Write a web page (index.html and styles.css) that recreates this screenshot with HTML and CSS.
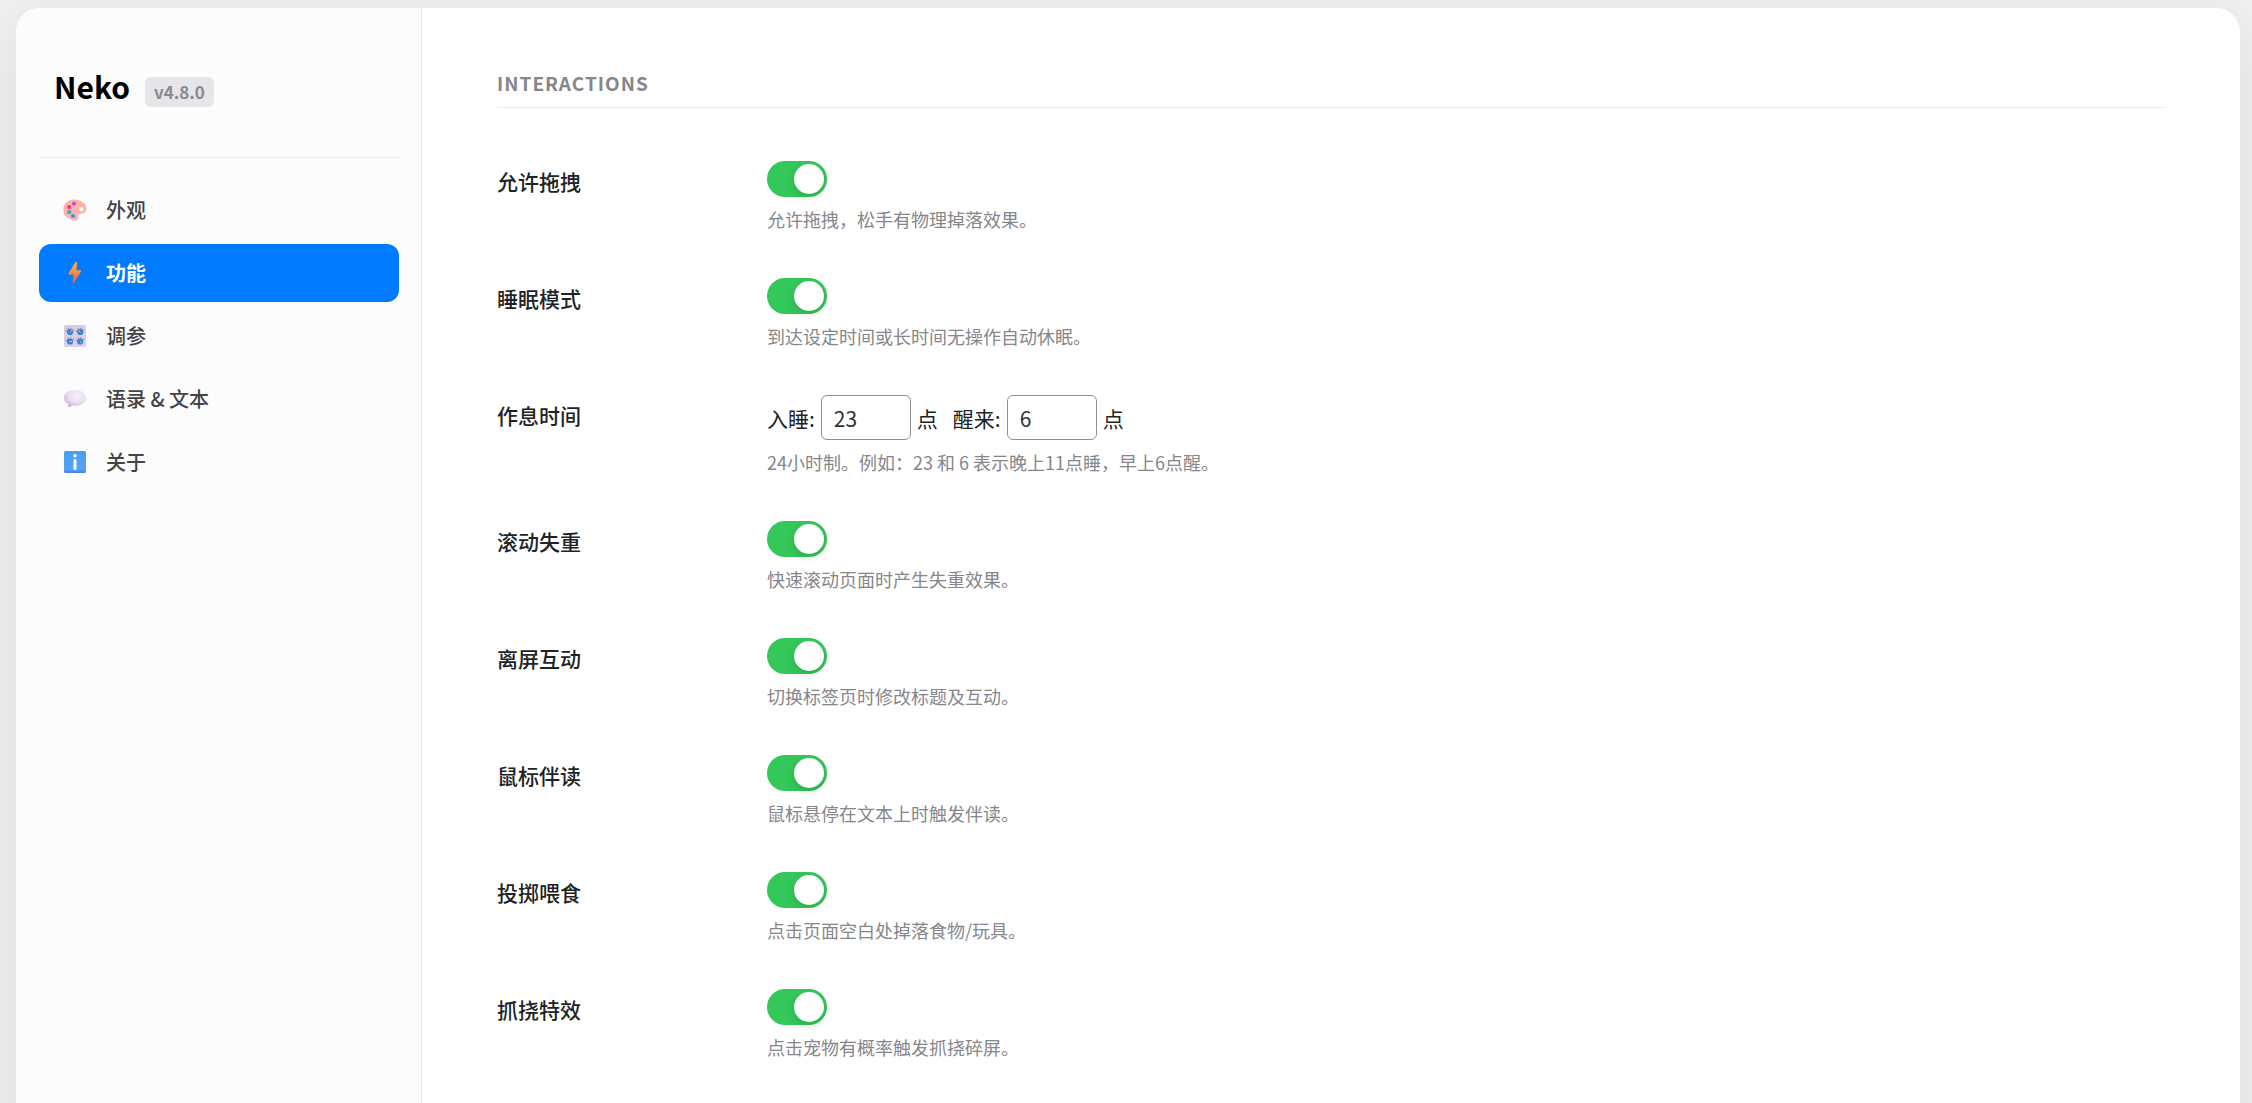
FILE: index.html
```html
<!DOCTYPE html>
<html lang="zh-CN">
<head>
    <meta charset="UTF-8">
    <meta name="viewport" content="width=device-width, initial-scale=1.0">
    <title>Neko</title>
    <link rel="stylesheet" href="styles.css">
</head>
<body>
    <div class="panel">
        <aside class="sidebar">
            <div class="brand">
                <h1>Neko</h1>
                <span class="version">v4.8.0</span>
            </div>
            <nav class="nav">
                <a href="#appearance" class="nav-item">
                    <svg class="nav-icon" viewBox="0 0 24 24" aria-hidden="true">
                        <defs>
                            <linearGradient id="palette" x1="0" y1="0" x2="0" y2="1">
                                <stop offset="0" stop-color="#ffb49c"/>
                                <stop offset="1" stop-color="#ffb3b5"/>
                            </linearGradient>
                        </defs>
                        <path fill="url(#palette)" fill-rule="evenodd" d="M11.5 1.5C17.900 1.500 23.500 5.500 23.500 10.800C23.500 14.200 21 15.900 18.200 15.900C16 15.900 15 16.500 15.200 18.200C15.500 20.500 15 22.500 12.300 22.500C5.500 22.500 .3 17.700 .3 11.600C.3 5.600 5.200 1.500 11.500 1.500ZM18.300 8.700A2.300 2.300 0 1 0 18.300 13.300A2.300 2.300 0 1 0 18.300 8.700Z"/>
                        <circle cx="11" cy="5.700" r="2.100" fill="#b756f0"/>
                        <circle cx="6.200" cy="9" r="2.100" fill="#e9387e"/>
                        <circle cx="6.200" cy="14.200" r="2.100" fill="#35b3ae"/>
                        <circle cx="10" cy="18" r="2.100" fill="#438ff0"/>
                    </svg>
                    外观
                </a>
                <a href="#features" class="nav-item active">
                    <svg class="nav-icon" viewBox="0 0 24 24" aria-hidden="true">
                        <defs>
                            <linearGradient id="bolt" x1="0" y1="0" x2="0" y2="1">
                                <stop offset="0" stop-color="#ffb43c"/>
                                <stop offset=".5" stop-color="#f58a45"/>
                                <stop offset="1" stop-color="#ef4f56"/>
                            </linearGradient>
                        </defs>
                        <path fill="url(#bolt)" d="M12.200 1.600Q12.500 1 13.200 1H13.400Q14.200 1 14.100 1.800L13.500 9.200H17.400Q18.700 9.300 18 10.400L10.800 22.300Q10.200 23.200 9.700 22.500L9.600 21.800L10.500 13.700H5.900Q4.800 13.500 5.400 12.500Z"/>
                    </svg>
                    功能
                </a>
                <a href="#tuning" class="nav-item">
                    <svg class="nav-icon" viewBox="0 0 24 24" aria-hidden="true">
                        <defs>
                            <linearGradient id="board" x1="0" y1="0" x2="1" y2="1">
                                <stop offset="0" stop-color="#d3c9dc"/>
                                <stop offset="1" stop-color="#e2d2f1"/>
                            </linearGradient>
                        </defs>
                        <rect x="1" y="1" width="22" height="22" rx="2" fill="url(#board)"/>
                        <g fill="none" stroke="#8e8299" stroke-width="1.200" stroke-dasharray="1.200 1.500">
                            <path d="M3.100 7.500A4 4 0 0 1 10.900 7.500"/>
                            <path d="M13.300 7.500A4 4 0 0 1 21.100 7.500"/>
                            <path d="M3.100 16.800A4 4 0 0 1 10.900 16.800"/>
                            <path d="M13.300 16.800A4 4 0 0 1 21.100 16.800"/>
                        </g>
                        <g fill="#3b82cd">
                            <circle cx="7" cy="8" r="3.100"/>
                            <circle cx="17.200" cy="8" r="3.100"/>
                            <circle cx="7" cy="17.500" r="3.100"/>
                            <circle cx="17.200" cy="17.500" r="3.100"/>
                        </g>
                        <g stroke="#d5e6fa" stroke-width=".8" stroke-linecap="round">
                            <path d="M7 8L8.500 6.800"/>
                            <path d="M17.200 8L15.800 6.800"/>
                            <path d="M7 17.500H8.700"/>
                            <path d="M17.200 17.500L18.500 18.600"/>
                        </g>
                    </svg>
                    调参
                </a>
                <a href="#quotes" class="nav-item">
                    <svg class="nav-icon" viewBox="0 0 24 24" aria-hidden="true">
                        <defs>
                            <radialGradient id="bubble" cx=".6" cy=".35" r=".65">
                                <stop offset="0" stop-color="#f6effa"/>
                                <stop offset=".6" stop-color="#eadff1"/>
                                <stop offset="1" stop-color="#cdb9df"/>
                            </radialGradient>
                        </defs>
                        <path fill="url(#bubble)" d="M12 3C18.300 3 23 6.500 23 11C23 15.500 18.300 18.800 12 18.800C10.800 18.800 9.900 18.700 9 18.500C8 19.500 6.800 20 5.500 20C4.700 20 4.600 19.400 4.900 18.800C5.300 18 5.400 17.300 5.200 16.800C2.600 15.400 1 13.400 1 11C1 6.500 5.700 3 12 3Z"/>
                    </svg>
                    语录 &amp; 文本
                </a>
                <a href="#about" class="nav-item">
                    <svg class="nav-icon" viewBox="0 0 24 24" aria-hidden="true">
                        <defs>
                            <linearGradient id="info" x1="0" y1="0" x2="0" y2="1">
                                <stop offset="0" stop-color="#4b9df0"/>
                                <stop offset=".85" stop-color="#56a2f6"/>
                                <stop offset="1" stop-color="#437fdc"/>
                            </linearGradient>
                        </defs>
                        <rect x="1" y="1" width="22" height="22" rx="1.500" fill="url(#info)"/>
                        <circle cx="12" cy="5.700" r="1.700" fill="#fff"/>
                        <rect x="10.500" y="9" width="3" height="11" rx="1.500" fill="#fff"/>
                    </svg>
                    关于
                </a>
            </nav>
        </aside>

        <main class="content">
            <h2 class="section-title">Interactions</h2>
            <div class="row">
                <label class="row-label" for="drag">允许拖拽</label>
                <div class="row-field">
                    <input type="checkbox" class="switch" id="drag" checked>
                    <p class="desc">允许拖拽，松手有物理掉落效果。</p>
                </div>
            </div>
            <div class="row">
                <label class="row-label" for="sleep">睡眠模式</label>
                <div class="row-field">
                    <input type="checkbox" class="switch" id="sleep" checked>
                    <p class="desc">到达设定时间或长时间无操作自动休眠。</p>
                </div>
            </div>
            <div class="row">
                <div class="row-label">作息时间</div>
                <div class="row-field">
                    <div class="times">
                        <div class="time">
                            <label for="sleepHour">入睡:</label>
                            <input type="text" inputmode="numeric" class="hour" id="sleepHour" value="23">
                            <span>点</span>
                        </div>
                        <div class="time">
                            <label for="wakeHour">醒来:</label>
                            <input type="text" inputmode="numeric" class="hour" id="wakeHour" value="6">
                            <span>点</span>
                        </div>
                    </div>
                    <p class="desc">24小时制。例如：23 和 6 表示晚上11点睡，早上6点醒。</p>
                </div>
            </div>
            <div class="row">
                <label class="row-label" for="scroll">滚动失重</label>
                <div class="row-field">
                    <input type="checkbox" class="switch" id="scroll" checked>
                    <p class="desc">快速滚动页面时产生失重效果。</p>
                </div>
            </div>
            <div class="row">
                <label class="row-label" for="leave">离屏互动</label>
                <div class="row-field">
                    <input type="checkbox" class="switch" id="leave" checked>
                    <p class="desc">切换标签页时修改标题及互动。</p>
                </div>
            </div>
            <div class="row">
                <label class="row-label" for="read">鼠标伴读</label>
                <div class="row-field">
                    <input type="checkbox" class="switch" id="read" checked>
                    <p class="desc">鼠标悬停在文本上时触发伴读。</p>
                </div>
            </div>
            <div class="row">
                <label class="row-label" for="feed">投掷喂食</label>
                <div class="row-field">
                    <input type="checkbox" class="switch" id="feed" checked>
                    <p class="desc">点击页面空白处掉落食物/玩具。</p>
                </div>
            </div>
            <div class="row">
                <label class="row-label" for="scratch">抓挠特效</label>
                <div class="row-field">
                    <input type="checkbox" class="switch" id="scratch" checked>
                    <p class="desc">点击宠物有概率触发抓挠碎屏。</p>
                </div>
            </div>
        </main>
    </div>
</body>
</html>
```

FILE: styles.css
```css
:root {
    --accent: #007aff;
    --green: #34c759;
    --muted: #86868b;
    --line: #ebebed;
}

* {
    box-sizing: border-box;
}

body {
    margin: 0;
    padding: 8px 12px 0 16px;
    height: 100vh;
    overflow: hidden;
    background-color: #f0f0f1;
    color: #1d2327;
    font-family: "Noto Sans CJK SC", sans-serif;
    font-size: 21px;
}

h1, h2, p {
    margin: 0;
}

.panel {
    display: flex;
    min-height: 120vh;
    background-color: #fff;
    border-radius: 24px;
    box-shadow: 0 12px 60px rgba(0, 0, 0, 0.08);
}

.sidebar {
    flex: 0 0 406px;
    padding: 48px 22px 48px 23px;
    background-color: #fcfcfc;
    border-right: 1px solid var(--line);
    border-radius: 24px 0 0 24px;
}

.brand {
    display: flex;
    align-items: baseline;
    gap: 15px;
    padding: 6px 15px 47px;
    border-bottom: 1px solid var(--line);
}

.brand h1 {
    color: #000;
    font-size: 30px;
    font-weight: 700;
    line-height: 48px;
}

.version {
    padding: 0 9px;
    border-radius: 6px;
    background-color: #e5e5ea;
    color: #8a8a8a;
    font-size: 17px;
    font-weight: 700;
    line-height: 30px;
}

.nav {
    display: flex;
    flex-direction: column;
    gap: 5px;
    margin-top: 23px;
}

.nav-item {
    display: flex;
    align-items: center;
    gap: 19px;
    height: 58px;
    padding: 0 24px;
    border-radius: 12px;
    color: #444;
    font-size: 20px;
    font-weight: 500;
    line-height: 28px;
    text-decoration: none;
}

.nav-item.active {
    background-color: var(--accent);
    color: #fff;
    font-weight: 700;
}

.nav-icon {
    width: 24px;
    height: 24px;
}

.content {
    flex: 1;
    padding: 60px 75px;
}

.section-title {
    margin-bottom: 53px;
    padding-bottom: 10px;
    border-bottom: 1px solid var(--line);
    color: var(--muted);
    font-size: 19px;
    font-weight: 700;
    line-height: 29px;
    letter-spacing: 1px;
    text-transform: uppercase;
}

.row {
    display: flex;
    margin-bottom: 45px;
}

.row-label {
    width: 270px;
    padding-top: 7px;
    font-weight: 500;
    line-height: 27px;
}

.row-field {
    flex: 1;
}

/* toggle switch */
.switch {
    appearance: none;
    display: block;
    width: 60px;
    height: 36px;
    margin: 0;
    padding: 3px;
    border-radius: 18px;
    background-color: #e9e9ea;
    cursor: pointer;
}

.switch::before {
    content: "";
    display: block;
    width: 30px;
    height: 30px;
    border-radius: 50%;
    background-color: #fff;
    box-shadow: 0 3px 8px rgba(0, 0, 0, 0.15);
}

.switch:checked {
    background-color: var(--green);
}

.switch:checked::before {
    margin-left: auto;
}

.times {
    display: flex;
    gap: 15px;
}

.time {
    display: flex;
    align-items: center;
    gap: 6px;
}

.hour {
    width: 90px;
    height: 45px;
    padding: 0 12px;
    border: 1px solid #8c8f94;
    border-radius: 6px;
    background-color: #fff;
    color: #2c3338;
    font-family: inherit;
    font-size: 21px;
}

.desc {
    margin-top: 9px;
    color: var(--muted);
    font-size: 18px;
    line-height: 27px;
}
```
